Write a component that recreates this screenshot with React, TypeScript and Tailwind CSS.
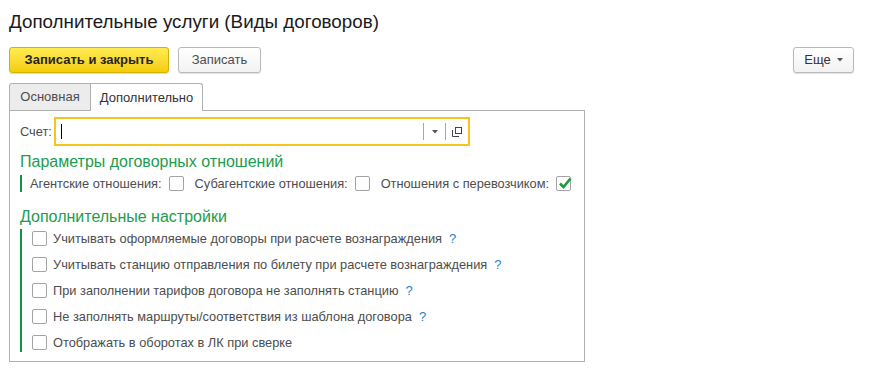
import React from "react";

const font = { fontFamily: '"Liberation Sans", Arial, sans-serif' };

function Box({ checked = false }: { checked?: boolean }) {
  return (
    <span className="relative block w-[15px] h-[15px] border border-[#a3a3a3] rounded-[2px] bg-white shrink-0">
      {checked && (
        <svg className="absolute left-[1px] top-[-1px]" width="15" height="14" viewBox="0 0 15 14">
          <path d="M2 7.5 L5.5 11 L12.5 2.5" fill="none" stroke="#1b9a3e" strokeWidth="2.6" />
        </svg>
      )}
    </span>
  );
}

function Q() {
  return <span className="text-[#2a7fc4] ml-[7px] text-[13px]">?</span>;
}

export default function App() {
  const rows: { t: string; q: boolean }[] = [
    { t: "Учитывать оформляемые договоры при расчете вознаграждения", q: true },
    { t: "Учитывать станцию отправления по билету при расчете вознаграждения", q: true },
    { t: "При заполнении тарифов договора не заполнять станцию", q: true },
    { t: "Не заполнять маршруты/соответствия из шаблона договора", q: true },
    { t: "Отображать в оборотах в ЛК при сверке", q: false },
  ];
  return (
    <div className="w-[871px] h-[374px] bg-white overflow-hidden pl-[9px] text-[#4d4d4d] whitespace-nowrap" style={font}>
      <div className="pt-[11px] text-[18.8px] leading-[22px] text-[#1a1a1a]">Дополнительные услуги (Виды договоров)</div>
      <div className="mt-[14px] flex items-center h-[26px] pr-[17px]">
        <button className="h-[26px] w-[160px] rounded-[3px] border border-[#d2b100] bg-gradient-to-b from-[#ffec4f] to-[#f5cd00] text-[13px] font-bold text-[#262626] shadow-[0_1px_1px_rgba(0,0,0,0.15)]">
          Записать и закрыть
        </button>
        <button className="ml-[9px] h-[26px] w-[83px] rounded-[3px] border border-[#b9b9b9] bg-gradient-to-b from-white to-[#f2f2f2] text-[13px] text-[#4d4d4d] shadow-[0_1px_1px_rgba(0,0,0,0.12)]">
          Записать
        </button>
        <div className="flex-1" />
        <button className="h-[26px] w-[61px] rounded-[3px] border border-[#b9b9b9] bg-gradient-to-b from-white to-[#f2f2f2] text-[13px] text-[#333] shadow-[0_1px_1px_rgba(0,0,0,0.12)] flex items-center justify-center gap-[6px]">
          <span>Еще</span>
          <svg width="6" height="4" viewBox="0 0 6 4"><path d="M0 0 H6 L3 3.5 Z" fill="#555" /></svg>
        </button>
      </div>
      <div className="mt-[10px] flex items-end h-[27px]">
        <div className="h-[27px] w-[82px] bg-[#ececec] border border-[#b0b0b0] border-b-0 rounded-tl-[3px] flex items-center justify-center text-[13px] text-[#4d4d4d]">
          Основная
        </div>
        <div className="h-[28px] w-[112px] -mb-px relative z-10 bg-white border border-l-0 border-[#b0b0b0] border-b-0 rounded-tr-[3px] flex items-center justify-center text-[13px] text-[#333]">
          Дополнительно
        </div>
      </div>
      <div className="w-[576px] h-[252px] border border-[#b0b0b0] pl-[10px] pt-[6px] text-[12.8px]">
        <div className="flex items-center h-[29px]">
          <span className="w-[34px]">Счет:</span>
          <div className="w-[416px] h-[29px] border-2 border-[#f4c51c] flex items-center">
            <div className="flex-1 h-full flex items-center pl-[5px]">
              <span className="w-px h-[15px] bg-black" />
            </div>
            <div className="w-px h-[17px] bg-[#a8a8a8]" />
            <div className="w-[21px] flex justify-center">
              <svg width="6" height="4" viewBox="0 0 6 4"><path d="M0 0 H6 L3 3.5 Z" fill="#555" /></svg>
            </div>
            <div className="w-px h-[17px] bg-[#a8a8a8]" />
            <div className="w-[22px] flex justify-center">
              <svg width="10" height="10" viewBox="0 0 10 10">
                <rect x="3.5" y="0.5" width="6" height="6" fill="none" stroke="#444" />
                <path d="M0.5 3 V9.5 H7" fill="none" stroke="#444" />
              </svg>
            </div>
          </div>
        </div>
        <div className="mt-[7px] text-[16px] leading-[18px] text-[#1c9c4c]">Параметры договорных отношений</div>
        <div className="mt-[4px] flex items-center border-l-2 border-[#0e9447] h-[17px] pl-[8px]">
          <span>Агентские отношения:</span>
          <span className="ml-[7px] flex items-center"><Box /></span>
          <span className="ml-[11px]">Субагентские отношения:</span>
          <span className="ml-[7px] flex items-center"><Box /></span>
          <span className="ml-[11px]">Отношения с перевозчиком:</span>
          <span className="ml-[7px] flex items-center"><Box checked /></span>
        </div>
        <div className="mt-[16px] text-[16px] leading-[18px] text-[#1c9c4c]">Дополнительные настройки</div>
        <div className="mt-[3px] border-l-2 border-[#0e9447] pl-[10px] h-[123px] flex flex-col justify-between py-[1px]">
          {rows.map((r) => (
            <div key={r.t} className="flex items-center h-[17px]">
              <Box />
              <span className="ml-[6px]">{r.t}</span>
              {r.q && <Q />}
            </div>
          ))}
        </div>
      </div>
    </div>
  );
}
